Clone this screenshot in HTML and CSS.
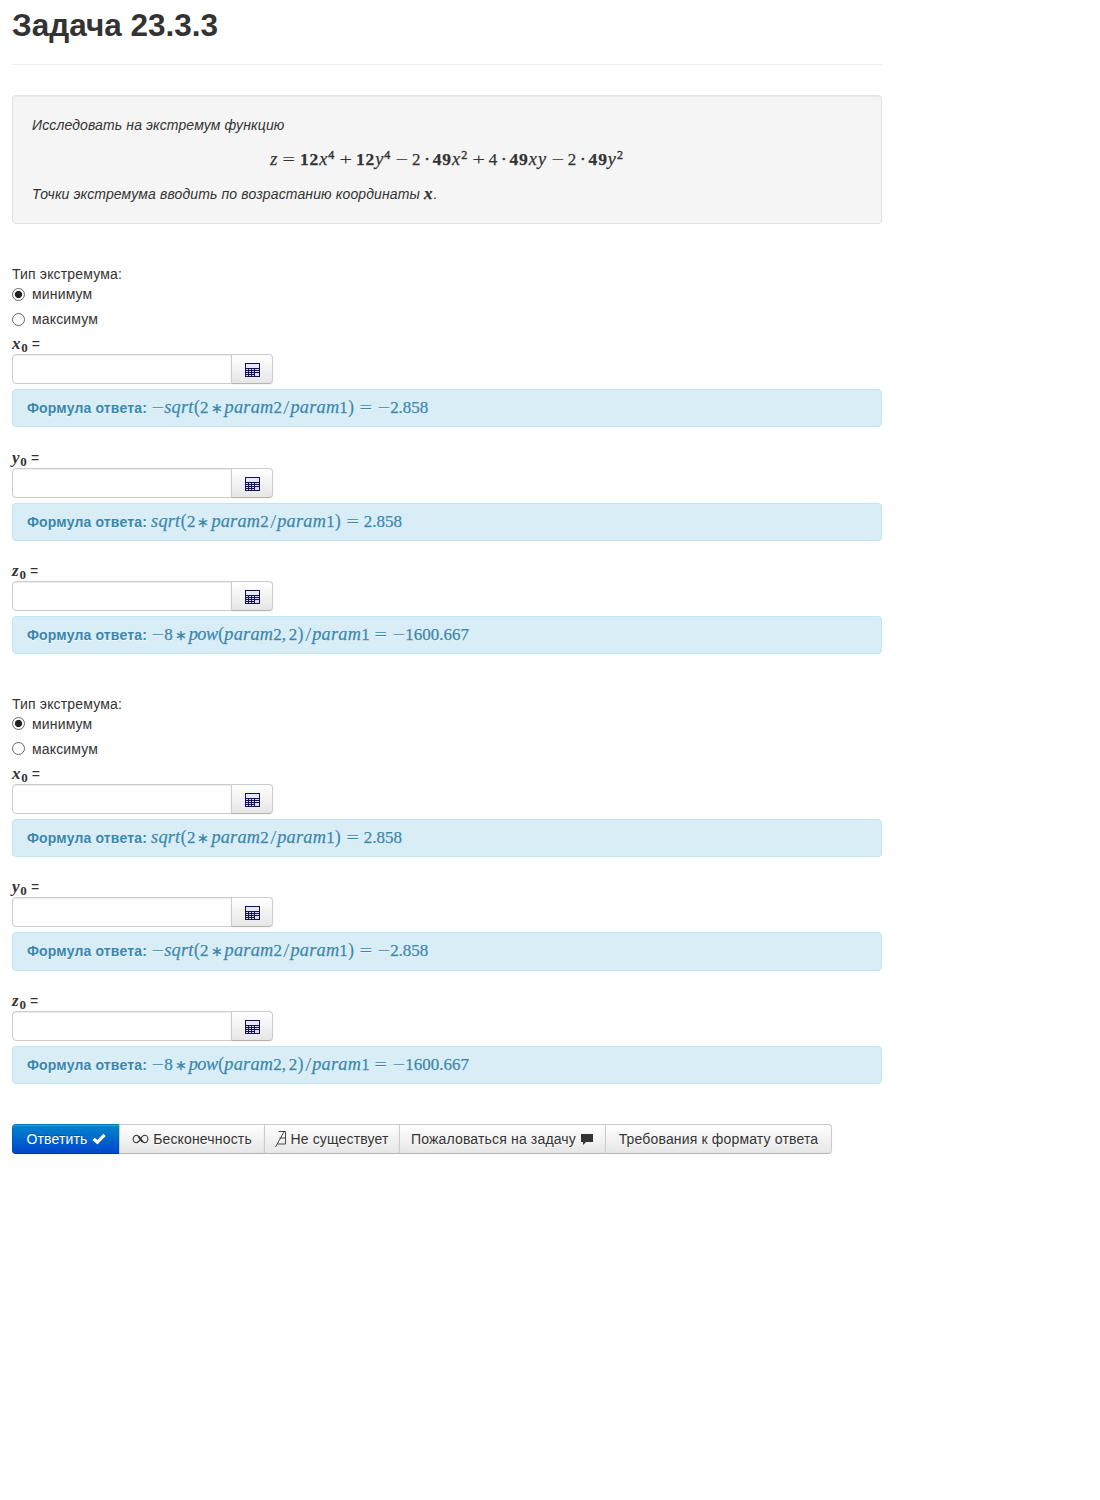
FILE: index.html
```html
<!DOCTYPE html>
<html lang="ru">
<head>
<meta charset="utf-8">
<title>Задача 23.3.3</title>
<link rel="stylesheet" href="styles.css">
</head>
<body>
<svg class="defs" width="0" height="0" aria-hidden="true">
  <symbol id="calc" viewBox="0 0 15 14">
    <path fill="#16124e" d="M0 0h15v14H0z"/>
    <path fill="#e7e7fa" d="M1 1h13v4H1z"/>
    <path fill="#d8d8f0" d="M1 6h2v1H1zM4 6h2v1H4zM7 6h2v1H7zM10 6h4v1h-4zM1 8h2v1H1zM4 8h2v1H4zM7 8h2v1H7zM10 8h4v1h-4zM1 10h2v1H1zM4 10h2v1H4zM7 10h2v1H7zM10 10h4v3h-4zM1 12h2v1H1zM4 12h2v1H4zM7 12h2v1H7z"/>
  </symbol>
</svg>
<main class="page">
  <h1>Задача 23.3.3</h1>
  <section class="well">
    <p>Исследовать на экстремум функцию</p>
    <div class="math display"><i>z</i><span class="rel">=</span><b>12</b><i class="x">x</i><sup>4</sup><span class="bin">+</span><b>12</b><i class="x">y</i><sup>4</sup><span class="bin">−</span>2<span class="dot">·</span><b>49</b><i class="x">x</i><sup>2</sup><span class="bin">+</span>4<span class="dot">·</span><b>49</b><i class="x">x</i><i class="x">y</i><span class="bin">−</span>2<span class="dot">·</span><b>49</b><i class="x">y</i><sup>2</sup></div>
    <p>Точки экстремума вводить по возрастанию координаты <span class="math bold-x">x</span>.</p>
  </section>

  <section class="extremum">
    <div>Тип экстремума:</div>
    <label class="radio"><span class="circle on"></span>минимум</label>
    <label class="radio"><span class="circle"></span>максимум</label>
    <div class="field">
      <div class="name"><span class="math var">x<sub>0</sub></span> =</div>
      <div class="entry"><input type="text"><button><svg><use href="#calc"/></svg></button></div>
      <div class="alert"><strong>Формула ответа:</strong> <span class="math"><span class="neg">−</span><i class="sqrt">sqrt</i><span class="paren">(</span>2<span class="bin">∗</span><i class="param">param</i>2<span class="slash">/</span><i class="param">param</i>1<span class="paren">)</span><span class="rel">=</span><span class="neg">−</span>2.858</span></div>
    </div>
    <div class="field">
      <div class="name"><span class="math var">y<sub>0</sub></span> =</div>
      <div class="entry"><input type="text"><button><svg><use href="#calc"/></svg></button></div>
      <div class="alert"><strong>Формула ответа:</strong> <span class="math"><i class="sqrt">sqrt</i><span class="paren">(</span>2<span class="bin">∗</span><i class="param">param</i>2<span class="slash">/</span><i class="param">param</i>1<span class="paren">)</span><span class="rel">=</span>2.858</span></div>
    </div>
    <div class="field">
      <div class="name"><span class="math var">z<sub>0</sub></span> =</div>
      <div class="entry"><input type="text"><button><svg><use href="#calc"/></svg></button></div>
      <div class="alert"><strong>Формула ответа:</strong> <span class="math"><span class="neg">−</span>8<span class="bin">∗</span><i class="pow">pow</i><span class="paren">(</span><i class="param">param</i>2<span class="comma">,</span>2<span class="paren">)</span><span class="slash">/</span><i class="param">param</i>1<span class="rel">=</span><span class="neg">−</span>1600.667</span></div>
    </div>
  </section>

  <section class="extremum">
    <div>Тип экстремума:</div>
    <label class="radio"><span class="circle on"></span>минимум</label>
    <label class="radio"><span class="circle"></span>максимум</label>
    <div class="field">
      <div class="name"><span class="math var">x<sub>0</sub></span> =</div>
      <div class="entry"><input type="text"><button><svg><use href="#calc"/></svg></button></div>
      <div class="alert"><strong>Формула ответа:</strong> <span class="math"><i class="sqrt">sqrt</i><span class="paren">(</span>2<span class="bin">∗</span><i class="param">param</i>2<span class="slash">/</span><i class="param">param</i>1<span class="paren">)</span><span class="rel">=</span>2.858</span></div>
    </div>
    <div class="field">
      <div class="name"><span class="math var">y<sub>0</sub></span> =</div>
      <div class="entry"><input type="text"><button><svg><use href="#calc"/></svg></button></div>
      <div class="alert"><strong>Формула ответа:</strong> <span class="math"><span class="neg">−</span><i class="sqrt">sqrt</i><span class="paren">(</span>2<span class="bin">∗</span><i class="param">param</i>2<span class="slash">/</span><i class="param">param</i>1<span class="paren">)</span><span class="rel">=</span><span class="neg">−</span>2.858</span></div>
    </div>
    <div class="field">
      <div class="name"><span class="math var">z<sub>0</sub></span> =</div>
      <div class="entry"><input type="text"><button><svg><use href="#calc"/></svg></button></div>
      <div class="alert"><strong>Формула ответа:</strong> <span class="math"><span class="neg">−</span>8<span class="bin">∗</span><i class="pow">pow</i><span class="paren">(</span><i class="param">param</i>2<span class="comma">,</span>2<span class="paren">)</span><span class="slash">/</span><i class="param">param</i>1<span class="rel">=</span><span class="neg">−</span>1600.667</span></div>
    </div>
  </section>

  <div class="actions">
    <button class="primary">Ответить <svg width="14" height="14" viewBox="0 0 14 14"><path fill="#fff" d="M.5 8l2.300-2.300L5.400 8l6-6.300L13.700 4 5.500 12.500z"/></svg></button>
    <button class="inf"><svg width="17" height="14" viewBox="0 0 17 14"><path fill="none" stroke="#333" stroke-width="1.100" d="M8.500 7C7 4.300 6 3.300 4.500 3.300S1.100 4.800 1.100 7s1.600 3.700 3.200 3.700S7 9.700 8.500 7s2.600-3.700 4.200-3.700 3.200 1.500 3.200 3.700-1.600 3.700-3.200 3.700S10 9.700 8.500 7z"/><path stroke="#333" stroke-width="1.900" d="M6.400 4.200l4.200 5.600"/></svg> Бесконечность</button>
    <button class="nex"><svg width="12" height="18" viewBox="0 0 12 18"><path fill="none" stroke="#333" stroke-width=".9" d="M3.500 1.500h7v12.500H2.500M4.500 8h6M.500 17L9.500 1"/></svg> Не существует</button>
    <button class="complain">Пожаловаться на задачу <svg width="14" height="14" viewBox="0 0 14 14"><path fill="#333" d="M1 2h12v8H6l-3 3v-3H1z"/></svg></button>
    <button class="format">Требования к формату ответа</button>
  </div>
</main>
</body>
</html>
```
FILE: styles.css
```css
* { box-sizing: border-box; }
body {
  margin: 0;
  background: #fff;
  color: #333;
  font: 14px/20px "Liberation Sans", Arial, sans-serif;
  letter-spacing: .16px;
}
.defs { display: block; }
.page { width: 870px; margin-left: 12px; }
h1 {
  height: 65px;
  margin: 0 0 30px;
  padding-top: 5px;
  border-bottom: 1px solid #eee;
  font-size: 31.5px;
  line-height: 40px;
  letter-spacing: 0;
}
.well {
  height: 129px;
  padding: 19px;
  border: 1px solid #e3e3e3;
  border-radius: 4px;
  background: #f5f5f5;
  box-shadow: inset 0 1px 1px rgba(0, 0, 0, .05);
  font-style: italic;
}
.well p { margin: 0; letter-spacing: .13px; }
.math {
  font-family: "Liberation Serif", "Times New Roman", serif;
  font-size: 16.94px;
  font-style: normal;
  line-height: 1;
  letter-spacing: 0;
  white-space: nowrap;
  -webkit-text-stroke: .25px currentColor;
}
.math i { font-size: 18.3px; line-height: 0; }
.display { height: 49px; text-align: center; line-height: 49px; }
.math sup { font-size: 12px; line-height: 0; vertical-align: 6px; margin-right: .8px; -webkit-text-stroke-width: .4px; }
.display b { font-size: 17.5px; line-height: 0; letter-spacing: .9px; }
.math .x { letter-spacing: 1px; }
.rel, .bin, .neg, .dot { display: inline-block; text-align: center; line-height: 1; transform: scaleX(1.35); -webkit-text-stroke-width: 0; }
.rel { width: 13.2px; margin: 0 4.7px; }
.bin { width: 13.2px; margin: 0 3.8px; }
.neg { width: 13.2px; }
.dot { width: 4.7px; margin: 0 3.8px; transform: none; -webkit-text-stroke-width: .5px; }
.alert .bin { width: 14px; margin: 0 1px; font-size: 14px; transform: none; -webkit-text-stroke-width: .3px; }
.sqrt { letter-spacing: .2px; }
.param { letter-spacing: .23px; }
.pow { letter-spacing: -.5px; }
.paren { display: inline-block; width: 6.6px; text-align: center; transform: scaleY(1.1); }
.slash { display: inline-block; width: 8.5px; text-align: center; transform: scale(1.3, 1.15); -webkit-text-stroke-width: 0; }
.comma { margin-right: 2.8px; }
.bold-x { font-weight: bold; font-style: italic; letter-spacing: 1px; }
.extremum { height: 429.8px; }
.well + .extremum { margin-top: 40.2px; }
.radio { display: flex; align-items: center; height: 20px; margin-bottom: 5px; }
.circle {
  width: 13px;
  height: 13px;
  margin-right: 7px;
  border: 1px solid #666;
  border-radius: 50%;
  background: #fff;
}
.circle.on { background: radial-gradient(circle, #222 0 3.2px, #fff 4px); }
.field { height: 113.4px; }
.name { height: 20px; }
.var { font-style: italic; font-weight: bold; -webkit-text-stroke-width: 0; }
.var sub { font-size: 13px; font-style: normal; line-height: 0; vertical-align: -3px; margin-left: .8px; }
.entry { display: flex; height: 30px; margin-bottom: 5px; }
.entry input {
  width: 220px;
  height: 30px;
  margin: 0;
  border: 1px solid #ccc;
  border-radius: 4px 0 0 4px;
  box-shadow: inset 0 1px 1px rgba(0, 0, 0, .075);
}
button {
  height: 30px;
  margin: 0;
  padding: 0 12px;
  border: 1px solid #ccc;
  border-bottom-color: #b3b3b3;
  background: linear-gradient(#fff, #e6e6e6);
  box-shadow: inset 0 1px 0 rgba(255, 255, 255, .2), 0 1px 2px rgba(0, 0, 0, .05);
  color: #333;
  font: inherit;
  letter-spacing: .16px;
  text-shadow: 0 1px 1px rgba(255, 255, 255, .75);
  white-space: nowrap;
}
.entry button { width: 42px; margin-left: -1px; padding: 2px 0 0 1px; border-radius: 0 4px 4px 0; }
.entry svg { display: block; width: 15px; height: 14px; margin: 0 auto; }
.alert {
  height: 38.2px;
  padding: 8px 14px;
  border: 1px solid #bce8f1;
  border-radius: 4px;
  background: #d9edf7;
  color: #3a87ad;
  text-shadow: 0 1px 0 rgba(255, 255, 255, .5);
}
.actions { display: flex; padding-top: .2px; }
.actions button { display: flex; align-items: center; justify-content: center; gap: 4px; margin-left: -1px; padding: 0; }
.actions .primary {
  width: 108px;
  margin-left: 0;
  border-color: rgba(0, 0, 0, .1) rgba(0, 0, 0, .1) rgba(0, 0, 0, .25);
  border-radius: 4px 0 0 4px;
  background: linear-gradient(#08c, #04c) border-box;
  color: #fff;
  text-shadow: 0 -1px 0 rgba(0, 0, 0, .25);
}
.actions .inf { width: 146px; }
.actions .nex { width: 136px; gap: 3px; }
.actions .complain { width: 207px; }
.actions .format { width: 227px; border-radius: 0 4px 4px 0; }
```
